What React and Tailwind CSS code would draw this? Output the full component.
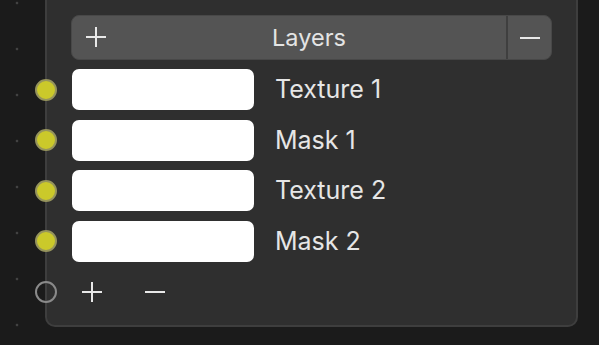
import React from "react";

const layers = ["Texture 1", "Mask 1", "Texture 2", "Mask 2"];

const Plus = ({ size = 22 }) => (
  <svg width={size} height={size} viewBox="0 0 22 22" fill="none" stroke="#e8e8e8" strokeWidth="2">
    <path d="M11 1v20M1 11h20" />
  </svg>
);

const Minus = ({ size = 22 }) => (
  <svg width={size} height={size} viewBox="0 0 22 22" fill="none" stroke="#e8e8e8" strokeWidth="2">
    <path d="M1 11h20" />
  </svg>
);

export default function App() {
  return (
    <div
      className="w-[599px] h-[345px] overflow-hidden bg-[#1b1b1b] bg-[radial-gradient(circle,#424242_1px,transparent_1.7px)] bg-[length:46px_46px] bg-[position:-6px_-20px]"
      style={{ fontFamily: "Inter, 'Noto Sans', sans-serif" }}
    >
      <div className="ml-[45px] w-[533px] h-[327px] bg-[#2f2f2f] border-x-2 border-b-2 border-[#3e3e3e] rounded-b-[10px] pt-[15px]">
        {/* header */}
        <div className="ml-[24px] w-[481px] h-[45px] flex bg-[#545454] border border-[#484848] rounded-[8px] overflow-hidden">
          <div className="flex-1 relative flex items-center justify-center">
            <div className="absolute left-[13px] top-[10px]">
              <Plus />
            </div>
            <span className="text-[23.5px] text-[#e4e4e4] pl-[40px]">Layers</span>
          </div>
          <div className="w-[45px] border-l-2 border-[#3f3f3f] flex items-center justify-center">
            <Minus />
          </div>
        </div>

        {/* rows */}
        <div className="mt-[9px] flex flex-col gap-[9.5px]">
          {layers.map((name) => (
            <div key={name} className="flex items-center">
              <div className="-ml-[12px] w-[22px] h-[22px] rounded-full bg-[#cbc92a] border-2 border-[#96945c]" />
              <div className="ml-[15px] w-[182px] h-[41px] bg-white rounded-[7px]" />
              <span className="ml-[21px] text-[25px] text-[#e6e6e6] leading-none">{name}</span>
            </div>
          ))}
        </div>

        <div className="mt-[19px] flex items-center">
          <div className="-ml-[12px] w-[22px] h-[22px] rounded-full border-2 border-[#8a8a8a]" />
          <div className="ml-[24px]">
            <Plus />
          </div>
          <div className="ml-[41px]">
            <Minus />
          </div>
        </div>
      </div>
    </div>
  );
}
